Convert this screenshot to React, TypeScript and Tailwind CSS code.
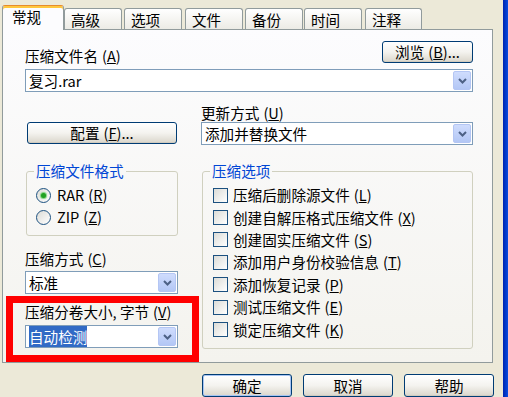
import clsx from "clsx";
import type { ReactNode } from "react";

const tabs = [
  { label: "高级", ml: "ml-0", w: "w-[58px]" },
  { label: "选项", ml: "ml-[2px]", w: "w-[58px]" },
  { label: "文件", ml: "ml-[3px]", w: "w-[58px]" },
  { label: "备份", ml: "ml-[2px]", w: "w-[58px]" },
  { label: "时间", ml: "ml-[1px]", w: "w-[58px]" },
  { label: "注释", ml: "ml-[3px]", w: "w-[57px]" },
];

const options: [string, string][] = [
  ["压缩后删除源文件", "L"],
  ["创建自解压格式压缩文件", "X"],
  ["创建固实压缩文件", "S"],
  ["添加用户身份校验信息", "T"],
  ["添加恢复记录", "P"],
  ["测试压缩文件", "E"],
  ["锁定压缩文件", "K"],
];

function Key({ k }: { k: string }) {
  return (
    <span className="ml-[4px]">
      (<u className="underline-offset-1">{k}</u>)
    </span>
  );
}

function XpButton({ children, className }: { children: ReactNode; className?: string }) {
  return (
    <div
      className={clsx(
        "flex items-center justify-center rounded-[3px] border border-[#003C74] bg-gradient-to-b from-white via-[#F4F3EF] to-[#DAD6CB] shadow-[inset_0_-1px_0_#D0CBBF]",
        className
      )}
    >
      {children}
    </div>
  );
}

function Combo({ children, className }: { children: ReactNode; className?: string }) {
  return (
    <div className={clsx("flex h-[23px] items-center border border-[#7F9DB9] bg-white", className)}>
      <div className="flex-1 whitespace-nowrap pl-[3px]">{children}</div>
      <div className="mr-[1px] flex h-[19px] w-[18px] items-center justify-center rounded-[2px] border border-[#B4C6F4] bg-gradient-to-b from-[#CFDCFD] to-[#B3C7F5]">
        <svg width="9" height="6" viewBox="0 0 9 6">
          <path d="M1 1 L4.5 4.5 L8 1" fill="none" stroke="#4D6185" strokeWidth="2" />
        </svg>
      </div>
    </div>
  );
}

function Group({ title, className, children }: { title: string; className?: string; children: ReactNode }) {
  return (
    <fieldset className={clsx("rounded-[3px] border border-[#D0D0BF]", className)}>
      <legend className="ml-[7px] px-[2px] leading-[14px] text-[#0046D5]">{title}</legend>
      {children}
    </fieldset>
  );
}

function Radio({ label, k, checked }: { label: string; k: string; checked?: boolean }) {
  return (
    <div className="flex h-[22px] items-center">
      <span className="flex h-[15px] w-[15px] items-center justify-center rounded-full border border-[#1C5180] bg-gradient-to-br from-[#DCDCD7] to-white">
        {checked && <span className="h-[5px] w-[5px] rounded-full bg-[#21A121] shadow-[0_0_1px_1px_#7BD27B]" />}
      </span>
      <span className="ml-[6px]">
        {label}
        <Key k={k} />
      </span>
    </div>
  );
}

function Check({ label, k }: { label: string; k: string }) {
  return (
    <div className="flex h-[22.4px] items-center">
      <span className="h-[15px] w-[15px] border border-[#1C5180] bg-gradient-to-br from-[#DCDCD7] to-white" />
      <span className="ml-[5px]">
        {label}
        <Key k={k} />
      </span>
    </div>
  );
}

export default function App() {
  return (
    <div className="flex h-[397px] w-[508px] overflow-hidden bg-[#ECE9D8] font-['Noto_Sans_CJK_SC',sans-serif] text-[14.6px] leading-[16px] text-black">
      <div className="flex w-[503px] flex-col pl-[2px] pt-[5px]">
        {/* tab strip */}
        <div className="flex h-[24px] items-end">
          <div className="relative z-10 mb-[-1px] h-[25px] w-[62px] rounded-t-[3px] border-x border-t border-[#919B9C] border-t-[#E68B2C] bg-[#FCFCFE] pl-[9px] pt-[3px] shadow-[inset_0_2px_0_#FFC73C]">
            常规
          </div>
          {tabs.map((t) => (
            <div
              key={t.label}
              className={clsx(
                "h-[21px] rounded-t-[3px] border-x border-t border-[#919B9C] bg-gradient-to-b from-white to-[#ECEBE5] pl-[6px] pt-[3px]",
                t.ml,
                t.w
              )}
            >
              {t.label}
            </div>
          ))}
        </div>

        {/* tab page */}
        <div className="flex h-[343px] w-[491px] flex-col border border-[#919B9C] bg-gradient-to-b from-[#FCFCFE] to-[#F4F3EE] pl-[22px] pr-[19px] pt-[11px]">
          <div className="flex h-[22px] items-end justify-between">
            <div className="mb-[-1px]">
              压缩文件名
              <Key k="A" />
            </div>
            <XpButton className="h-[22px] w-[91px]">
              浏览
              <Key k="B" />
              ...
            </XpButton>
          </div>
          <Combo className="mt-[6px]">复习.rar</Combo>

          <div className="mt-[13px] flex gap-[23px]">
            {/* left column */}
            <div className="flex w-[153px] flex-col">
              <XpButton className="ml-[2px] mt-[17px] h-[22px] w-[150px]">
                配置
                <Key k="F" />
                ...
              </XpButton>
              <Group title="压缩文件格式" className="ml-[1px] mt-[20px] h-[72px] w-[152px]">
                <div className="pl-[9px] pt-[6px]">
                  <Radio label="RAR" k="R" checked />
                  <Radio label="ZIP" k="Z" />
                </div>
              </Group>
              <div className="mt-[15px]">
                压缩方式
                <Key k="C" />
              </div>
              <Combo className="mt-[4px]">标准</Combo>
              <div className="relative mt-[10px]">
                <div>
                  压缩分卷大小, 字节
                  <Key k="V" />
                </div>
                <Combo className="mt-[5px]">
                  <span className="bg-[#316AC5] text-white">自动检测</span>
                </Combo>
                <div className="pointer-events-none absolute -bottom-[14px] -left-[19px] -right-[21px] -top-[8px] border-[7px] border-[#FF0000]" />
              </div>
            </div>

            {/* right column */}
            <div className="flex w-[272px] flex-col">
              <div>
                更新方式
                <Key k="U" />
              </div>
              <Combo className="mt-[1px]">添加并替换文件</Combo>
              <Group title="压缩选项" className="ml-[1px] mt-[19px] h-[185px] w-[271px]">
                <div className="pl-[10px] pt-[6px]">
                  {options.map(([label, k]) => (
                    <Check key={k} label={label} k={k} />
                  ))}
                </div>
              </Group>
            </div>
          </div>
        </div>

        {/* dialog buttons */}
        <div className="mt-[11px] flex gap-[11px] pl-[200px]">
          <XpButton className="h-[23px] w-[90px] shadow-[inset_0_0_0_1px_#A7C4F2]">确定</XpButton>
          <XpButton className="h-[23px] w-[90px]">取消</XpButton>
          <XpButton className="h-[23px] w-[90px]">帮助</XpButton>
        </div>
      </div>
      <div className="w-[5px] bg-gradient-to-r from-[#0022B0] to-[#0A4BE0]" />
    </div>
  );
}
